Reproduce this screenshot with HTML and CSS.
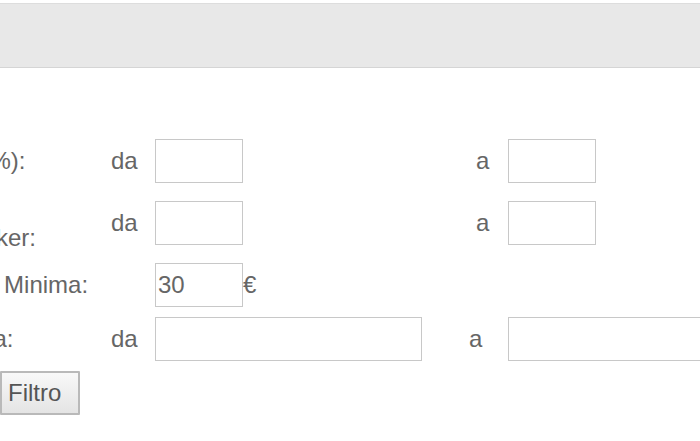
FILE: index.html
```html
<!DOCTYPE html>
<html lang="it">
<head>
<meta charset="utf-8">
<title>Filtro</title>
<link rel="stylesheet" href="styles.css">
</head>
<body>
<div class="topbar"></div>
<form class="filters">
  <div class="row">
    <span class="label">Sconto (%):</span>
    <span class="da">da</span>
    <input class="field small" type="text">
    <span class="a a-short">a</span>
    <input class="field small" type="text">
  </div>
  <div class="row">
    <span class="label">Numero<br>Click Broker:</span>
    <span class="da">da</span>
    <input class="field small" type="text">
    <span class="a a-short">a</span>
    <input class="field small" type="text">
  </div>
  <div class="row">
    <span class="label label-wide">Cauzione Minima:</span>
    <input class="field small" type="text" value="30">
    <span class="unit">€</span>
  </div>
  <div class="row">
    <span class="label">Scadenza:</span>
    <span class="da">da</span>
    <input class="field wide" type="text">
    <span class="a a-long">a</span>
    <input class="field wide" type="text">
  </div>
  <div class="actions">
    <button class="btn" type="button">Filtro</button>
  </div>
</form>
</body>
</html>
```
FILE: styles.css
```css
html, body {
  margin: 0;
  padding: 0;
  overflow: hidden;
  background: #ffffff;
}

body {
  font-family: "Liberation Sans", Arial, Helvetica, sans-serif;
  font-size: 24px;
  color: #666666;
}

.topbar {
  margin-top: 3px;
  height: 63px;
  background: #e8e8e8;
  border-top: 1px solid #dddddd;
  border-bottom: 1px solid #d5d5d5;
}

.filters {
  margin: 71px 0 0 -100px;
  display: flex;
  flex-direction: column;
  gap: 10px;
  width: 900px;
}

.row {
  display: flex;
  align-items: center;
  min-height: 44px;
  line-height: 30px;
}

.label {
  width: 211px;
  flex: none;
  white-space: nowrap;
}

.label-wide {
  width: 258px;
  margin-left: -3px;
  word-spacing: -1px;
}

.da {
  width: 44px;
  flex: none;
}

.field {
  box-sizing: border-box;
  height: 44px;
  border: 1px solid #c8c8c8;
  background: #ffffff;
  font-family: inherit;
  font-size: 24px;
  color: #666666;
  padding: 0 2px;
  margin: 0;
  outline: none;
  flex: none;
}

.field.small {
  width: 88px;
}

.field.wide {
  width: 267px;
}

.a {
  flex: none;
}

.a-short {
  margin-left: 233px;
  width: 32px;
}

.a-long {
  margin-left: 47px;
  width: 39px;
}

.unit {
  flex: none;
}

.actions {
  display: flex;
  padding-left: 100px;
}

.btn {
  box-sizing: border-box;
  width: 80px;
  height: 44px;
  font-family: inherit;
  font-size: 24px;
  color: #555555;
  background: linear-gradient(#f8f8f8, #e4e4e4);
  border: 2px solid #b9b9b9;
  border-radius: 1px;
  padding: 0 0 0 6px;
  margin: 0;
  text-align: left;
}
```
